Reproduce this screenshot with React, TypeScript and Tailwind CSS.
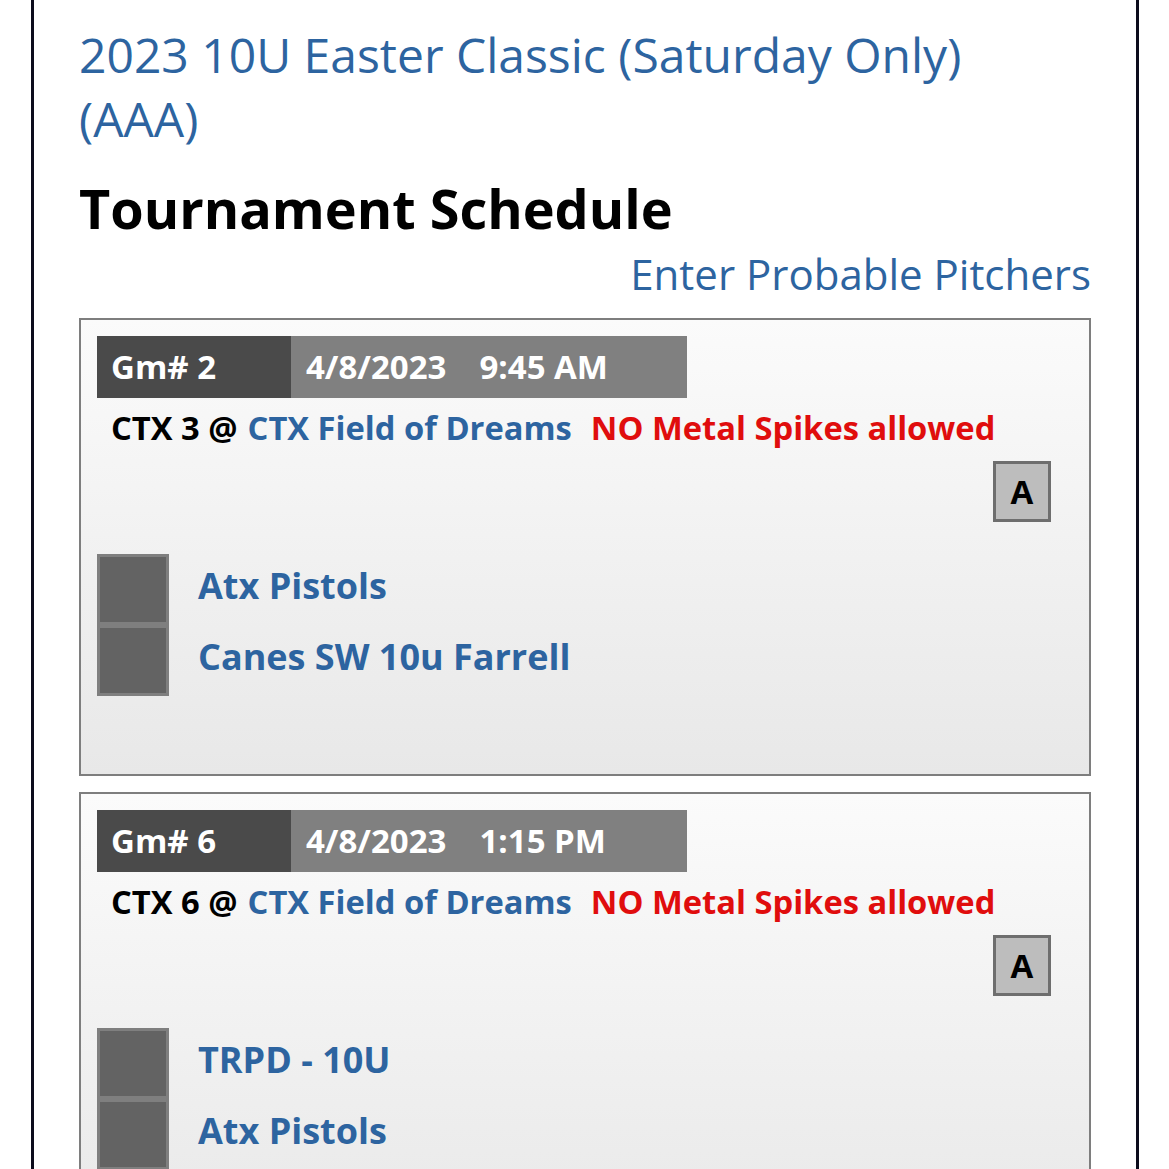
const font = { fontFamily: '"Open Sans", "Noto Sans", sans-serif' }

type Game = {
  num: number
  date: string
  time: string
  field: string
  teams: string[]
}

const games: Game[] = [
  { num: 2, date: "4/8/2023", time: "9:45 AM", field: "CTX 3", teams: ["Atx Pistols", "Canes SW 10u Farrell"] },
  { num: 6, date: "4/8/2023", time: "1:15 PM", field: "CTX 6", teams: ["TRPD - 10U", "Atx Pistols"] },
]

function GameCard({ game }: { game: Game }) {
  return (
    <div className="border-2 border-[#7e7e7e] bg-gradient-to-b from-[#fbfbfb] to-[#e8e8e8] p-4 pb-[78px]">
      <div className="flex h-[62px] w-[590px] text-[33px] font-bold text-white">
        <div className="flex w-[194px] items-center bg-[#4a4a4a] pl-[14px]">Gm# {game.num}</div>
        <div className="flex flex-1 items-center bg-[#808080] pl-[15px]">
          <span>{game.date}</span>
          <span className="ml-[33px]">{game.time}</span>
        </div>
      </div>
      <div className="mt-2 flex h-[44px] items-center pl-[14px] text-[32.7px] font-bold">
        <span className="text-black">{game.field} @</span>
        <span className="ml-[10px] text-[#2d64a0]">CTX Field of Dreams</span>
        <span className="ml-[19px] text-[#e00d0d]">NO Metal Spikes allowed</span>
      </div>
      <div className="mt-[11px] flex justify-end pr-[22px]">
        <div className="flex h-[61px] w-[58px] items-center justify-center border-[3px] border-[#6e6e6e] bg-[#bdbdbd] text-[33px] font-bold text-black">
          A
        </div>
      </div>
      <div className="mt-8 flex flex-col">
        {game.teams.map((team, i) => (
          <div key={i} className="flex items-center">
            <div className="h-[71px] w-[72px] border-[3px] border-[#7f7f7f] bg-[#636363]" />
            <span className="ml-[29px] pb-2 text-[36px] font-bold text-[#2d64a0]">{team}</span>
          </div>
        ))}
      </div>
    </div>
  )
}

export default function App() {
  return (
    <div className="min-h-screen bg-white" style={font}>
      <div className="ml-[31px] w-[1108px] border-x-[3px] border-[#0c0c1c] px-[45px] pt-[23px] pb-10">
        <h1 className="max-w-[960px] text-[48px] leading-[64px] font-normal text-[#2d64a0]">
          2023 10U Easter Classic (Saturday Only) (AAA)
        </h1>
        <h2 className="mt-[22px] text-[54px] leading-[70px] font-bold text-black">Tournament Schedule</h2>
        <div className="mt-[2px] text-right text-[42px] leading-[58px] text-[#2d64a0]">Enter Probable Pitchers</div>
        <div className="mt-[15px] flex flex-col gap-4">
          {games.map((g) => (
            <GameCard key={g.num} game={g} />
          ))}
        </div>
      </div>
    </div>
  )
}
